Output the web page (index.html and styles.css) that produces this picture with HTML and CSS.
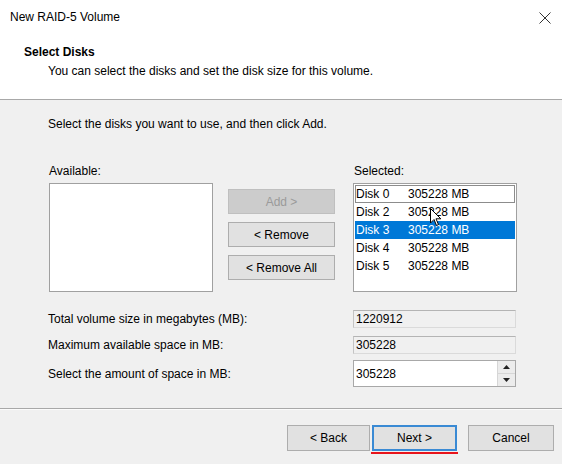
FILE: index.html
```html
<!DOCTYPE html>
<html>
<head>
<meta charset="utf-8">
<link rel="stylesheet" href="styles.css">
</head>
<body>
<div class="win">
  <div class="top">
    <div class="titlebar">
      <span class="title">New RAID-5 Volume</span>
      <svg class="close" width="12" height="12" viewBox="0 0 12 12"><path d="M0.5 0.5 L11.5 11.5 M11.5 0.5 L0.5 11.5" stroke="#333" stroke-width="1" fill="none"/></svg>
    </div>
    <div class="header">
      <div class="h-title">Select Disks</div>
      <div class="h-sub">You can select the disks and set the disk size for this volume.</div>
    </div>
  </div>
  <div class="content">
    <div class="intro">Select the disks you want to use, and then click Add.</div>
    <div class="pick">
      <div class="col">
        <div class="lbl">Available:</div>
        <div class="listbox"></div>
      </div>
      <div class="btns">
        <button class="btn disabled">Add &gt;</button>
        <button class="btn">&lt; Remove</button>
        <button class="btn">&lt; Remove All</button>
      </div>
      <div class="col col-sel">
        <div class="lbl">Selected:</div>
        <div class="listbox sel">
          <div class="item focus"><span class="dname">Disk 0</span><span>305228 MB</span></div>
          <div class="item"><span class="dname">Disk 2</span><span>305228 MB</span></div>
          <div class="item active"><span class="dname">Disk 3</span><span>305228 MB</span></div>
          <div class="item"><span class="dname">Disk 4</span><span>305228 MB</span></div>
          <div class="item"><span class="dname">Disk 5</span><span>305228 MB</span></div>
          <svg class="cursor" width="12" height="19" viewBox="0 0 12 19"><path d="M0.5 0.5 L0.5 15 L4 11.5 L6.5 17.5 L8.5 16.6 L6 10.8 L10.8 10.8 Z" fill="#fff" stroke="#000" stroke-width="1" stroke-linejoin="round"/></svg>
        </div>
      </div>
    </div>
    <div class="fields">
      <div class="row r1"><span class="flbl">Total volume size in megabytes (MB):</span><div class="ro">1220912</div></div>
      <div class="row r2"><span class="flbl">Maximum available space in MB:</span><div class="ro">305228</div></div>
      <div class="row r3"><span class="flbl">Select the amount of space in MB:</span>
        <div class="spin">
          <span class="spin-val">305228</span>
          <div class="spin-btns">
            <div class="sb"><svg width="7" height="4" viewBox="0 0 7 4"><path d="M3.5 0 L7 4 L0 4 Z" fill="#222"/></svg></div>
            <div class="sb"><svg width="7" height="4" viewBox="0 0 7 4"><path d="M0 0 L7 0 L3.5 4 Z" fill="#222"/></svg></div>
          </div>
        </div>
      </div>
    </div>
  </div>
  <div class="footer">
    <button class="btn fbtn back">&lt; Back</button>
    <button class="btn fbtn next">Next &gt;<span class="redline"></span></button>
    <button class="btn fbtn cancel">Cancel</button>
  </div>
</div>
</body>
</html>
```
FILE: styles.css
```css
* { box-sizing: border-box; }
html, body { margin: 0; padding: 0; }
body {
  font-family: "Liberation Sans", Arial, sans-serif;
  font-size: 12px;
  color: #000;
  background: #f0f0f0;
}
.win {
  width: 562px;
  height: 464px;
  display: flex;
  flex-direction: column;
  background: #f0f0f0;
  overflow: hidden;
}
.top {
  background: #fff;
  height: 100px;
  border-bottom: 1px solid #a8a8a8;
}
.titlebar {
  height: 35px;
  display: flex;
  align-items: flex-start;
  justify-content: space-between;
  padding: 8px 11px 0 10px;
}
.title { line-height: 18px; font-size: 12px; }
.close { margin-top: 4px; }
.header { padding-left: 24px; }
.h-title { font-weight: bold; line-height: 16px; margin-top: 9px; }
.h-sub { padding-left: 24px; line-height: 16px; margin-top: 3px; }

.content {
  height: 309px;
  padding: 16px 0 0 48px;
  border-bottom: 1px solid #a8a8a8;
}
.intro { line-height: 16px; }
.pick {
  display: flex;
  margin-top: 31px;
}
.col { width: 164px; margin-left: 1px; }
.lbl { line-height: 16px; height: 20px; }
.listbox {
  width: 164px;
  height: 109px;
  background: #fff;
  border: 1px solid #a0a0a0;
}
.btns {
  width: 107px;
  margin-left: 15px;
  padding-top: 26px;
  display: flex;
  flex-direction: column;
  gap: 8px;
}
.btn {
  font-family: "Liberation Sans", Arial, sans-serif;
  font-size: 12px;
  color: #000;
  background: #e1e1e1;
  border: 1px solid #adadad;
  height: 25px;
  padding: 0;
  margin: 0;
}
.btn.disabled { background: #cccccc; border-color: #bfbfbf; color: #9a9a9a; }
.col-sel { margin-left: 18px; }
.col-sel .lbl { padding-left: 1px; }
.listbox.sel { padding: 1px 1px 0 1px; position: relative; }
.item {
  height: 18px;
  line-height: 18px;
  display: flex;
  padding-left: 1px;
}
.dname { width: 52px; }
.item.focus { outline: 1px solid #8c8c8c; outline-offset: -1px; }
.item.active { background: #0078d7; color: #fff; }
.cursor { position: absolute; left: 76px; top: 24px; }

.fields { margin-top: 18px; }
.row { display: flex; align-items: center; }
.flbl { width: 305px; line-height: 16px; }
.ro {
  width: 163px;
  height: 18px;
  line-height: 16px;
  padding-left: 2px;
  background: #f0f0f0;
  border: 1px solid #dadada;
  border-top-color: #b4b4b4;
  border-left-color: #c4c4c4;
}
.r2 { margin-top: 8px; }
.r3 { margin-top: 6px; }
.spin {
  width: 163px;
  height: 27px;
  background: #fff;
  border: 1px solid #a8a8a8;
  display: flex;
  align-items: center;
  justify-content: space-between;
}
.spin-val { padding-left: 2px; line-height: 16px; }
.spin-btns {
  width: 18px;
  height: 25px;
  display: flex;
  flex-direction: column;
  border-left: 1px solid #d6d6d6;
}
.sb {
  flex: 1;
  background: #ececec;
  display: flex;
  align-items: center;
  justify-content: center;
}
.sb + .sb { border-top: 1px solid #d6d6d6; }

.footer {
  flex: 1;
  display: flex;
  align-items: flex-start;
  padding: 15px 0 0 287px;
  border-top: 1px solid #fbfbfb;
}
.fbtn { height: 26px; }
.back { width: 83px; }
.next {
  width: 85px;
  margin-left: 2px;
  border: 2px solid #3a8ad4;
  position: relative;
}
.cancel { width: 86px; margin-left: 11px; }
.redline {
  position: absolute;
  left: -3px;
  right: -3px;
  bottom: -5px;
  height: 2px;
  background: #e8141c;
}
```
